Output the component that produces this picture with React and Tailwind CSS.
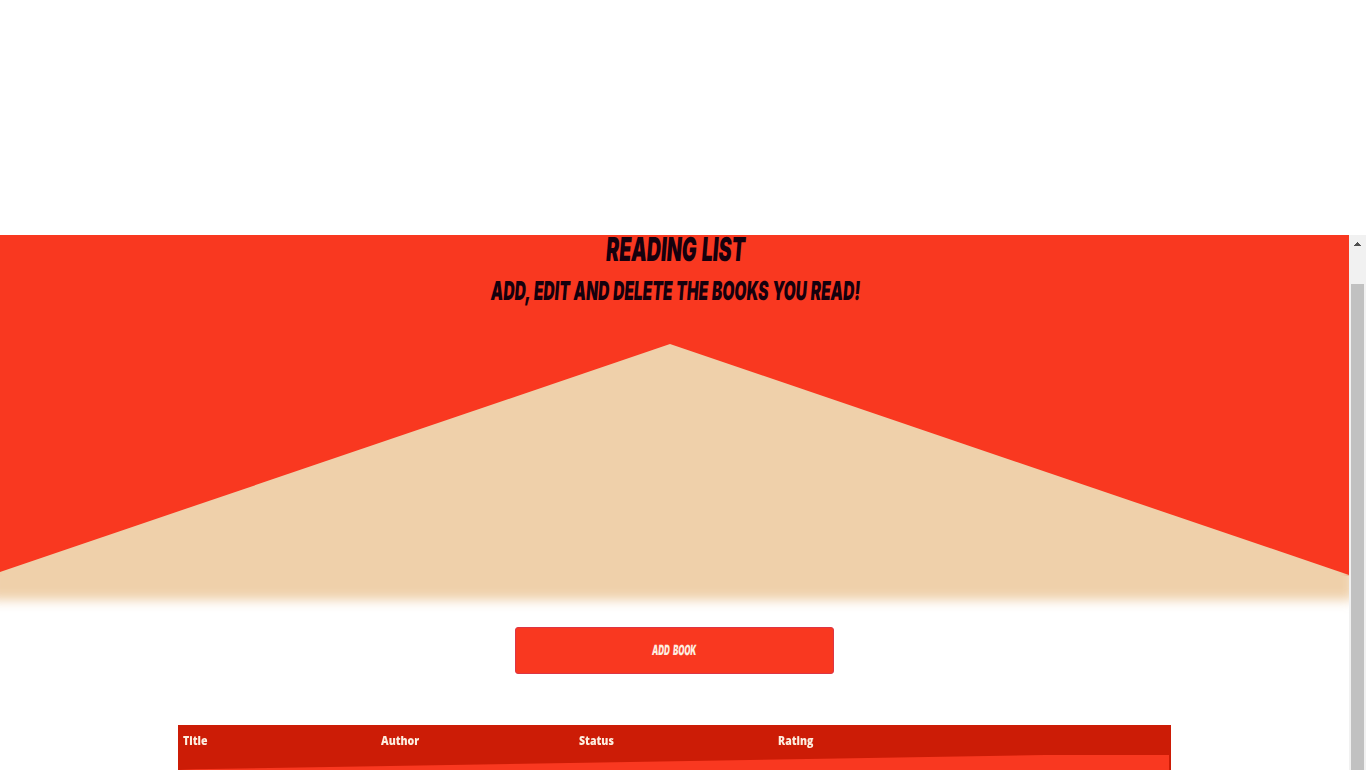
const columns = ["Title", "Author", "Status", "Rating"];

function Header() {
  return (
    <header className="relative h-[391px] bg-white">
      <div className="h-[341px] bg-[#f93820] text-center font-['Inter',sans-serif] font-black text-[#16000d]">
        <h1 className="flex h-[28px] items-center justify-center whitespace-nowrap pl-[3px] text-[33px] leading-[28px]">
          <span className="inline-block -skew-x-[8deg] scale-x-[0.595] [word-spacing:2px]">READING LIST</span>
        </h1>
        <h2 className="mt-[14px] flex h-[28px] items-center justify-center whitespace-nowrap pl-[3px] text-[26px] leading-[28px]">
          <span className="inline-block -skew-x-[8deg] scale-x-[0.6] [word-spacing:1px]">ADD, EDIT AND DELETE THE BOOKS YOU READ!</span>
        </h2>
      </div>
      <div className="absolute -left-[12px] top-[79px] h-[286px] w-[1366px] bg-[#efd0aa] blur-[6px] [clip-path:polygon(682px_30px,1361px_261px,1361px_311px,12px_311px,12px_258px)]" />
    </header>
  );
}

function BookTable() {
  return (
    <div className="mx-auto mt-[51px] h-[45px] w-[993px] overflow-hidden bg-[#cc1c06] pr-[2px] font-['Open_Sans',sans-serif] text-[13px] font-extrabold text-[#fdeee0]">
      <div className="grid h-[30px] grid-cols-[198px_198px_199px_1fr] pl-[5px]">
        {columns.map((name) => (
          <div key={name} className="leading-[30px]">
            <span className="inline-block origin-left scale-x-[0.81]">{name}</span>
          </div>
        ))}
      </div>
      <div className="h-[15px] bg-[#f93820] [clip-path:polygon(0_15px,17px_14.3px,867px_0,100%_0,100%_100%,0_100%)]" />
    </div>
  );
}

function Scrollbar() {
  return (
    <aside className="h-[535px] w-[17px] shrink-0 bg-[#f1f1f1] px-[2px]">
      <div className="flex h-[49px] justify-center pt-[7px]">
        <svg width="7" height="4" viewBox="0 0 7 4" shapeRendering="crispEdges" fill="#505050">
          <path d="M3 0h1v1h1v1h1v1h1v1H0V3h1V2h1V1h1z" />
        </svg>
      </div>
      <div className="h-[486px] w-[13px] bg-[#c1c1c1]" />
    </aside>
  );
}

export default function App() {
  return (
    <div className="h-[770px] w-[1366px] overflow-hidden bg-white pt-[235px]">
      <div className="flex">
        <main className="w-[1349px]">
          <Header />
          <button className="mx-auto mt-[1px] flex h-[47px] w-[319px] items-center justify-center rounded-[3px] border border-[#dc3545] bg-[#f93820] pb-[2px] font-['Inter',sans-serif] text-[14px] font-black text-[#fdeee0]">
            <span className="inline-block whitespace-nowrap -skew-x-[9deg] scale-x-[0.56] [word-spacing:3px]">ADD BOOK</span>
          </button>
          <BookTable />
        </main>
        <Scrollbar />
      </div>
    </div>
  );
}
